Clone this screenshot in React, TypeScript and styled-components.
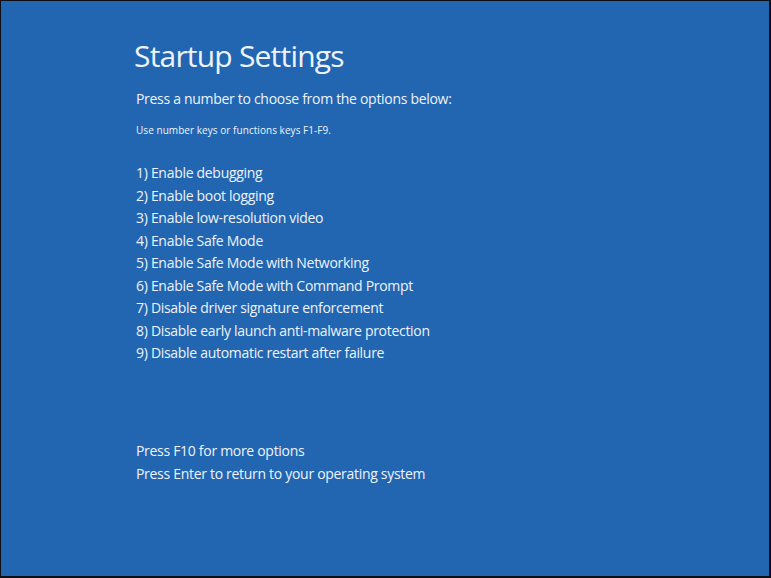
import React from "react";
import styled, { createGlobalStyle } from "styled-components";

const Global = createGlobalStyle`
  html, body { margin: 0; padding: 0; background: #0d0f14; }
  body { width: 771px; height: 578px; overflow: hidden; }
  #root { width: 771px; height: 578px; }
`;

const Frame = styled.div`
  box-sizing: border-box;
  width: 771px;
  height: 578px;
  border-top: 1px solid #0d0f14;
  border-left: 1px solid #0d0f14;
  border-right: 2px solid #0d0f14;
  border-bottom: 2px solid #0d0f14;
  background: #2266b2;
  color: #eef3fa;
  font-family: "Open Sans", "Noto Sans", sans-serif;
  padding: 35px 0 0 133px;
  display: flex;
  flex-direction: column;
`;

const Title = styled.h1`
  margin: 0;
  font-weight: 400;
  font-size: 30px;
  line-height: 40px;
  letter-spacing: -0.8px;
`;

const Lead = styled.p`
  margin: 13px 0 0 2px;
  font-size: 14px;
  line-height: 20px;
  letter-spacing: -0.3px;
`;

const Hint = styled.p`
  margin: 14px 0 0 2px;
  font-size: 10px;
  line-height: 14px;
  letter-spacing: 0.05px;
`;

const Options = styled.ol`
  list-style: none;
  margin: 25px 0 0 2px;
  padding: 0;
  display: flex;
  flex-direction: column;
`;

const Option = styled.li`
  font-size: 14px;
  line-height: 22.5px;
  letter-spacing: -0.3px;
`;

const Footer = styled.div`
  margin: 74px 0 0 2px;
  display: flex;
  flex-direction: column;
`;

const FooterLine = styled.div`
  font-size: 14px;
  line-height: 23px;
  letter-spacing: -0.3px;
`;

const options = [
  "Enable debugging",
  "Enable boot logging",
  "Enable low-resolution video",
  "Enable Safe Mode",
  "Enable Safe Mode with Networking",
  "Enable Safe Mode with Command Prompt",
  "Disable driver signature enforcement",
  "Disable early launch anti-malware protection",
  "Disable automatic restart after failure",
];

export default function App() {
  return (
    <>
      <Global />
      <Frame>
        <Title>Startup Settings</Title>
        <Lead>Press a number to choose from the options below:</Lead>
        <Hint>Use number keys or functions keys F1-F9.</Hint>
        <Options>
          {options.map((o, i) => (
            <Option key={o}>
              {i + 1}) {o}
            </Option>
          ))}
        </Options>
        <Footer>
          <FooterLine>Press F10 for more options</FooterLine>
          <FooterLine>Press Enter to return to your operating system</FooterLine>
        </Footer>
      </Frame>
    </>
  );
}
